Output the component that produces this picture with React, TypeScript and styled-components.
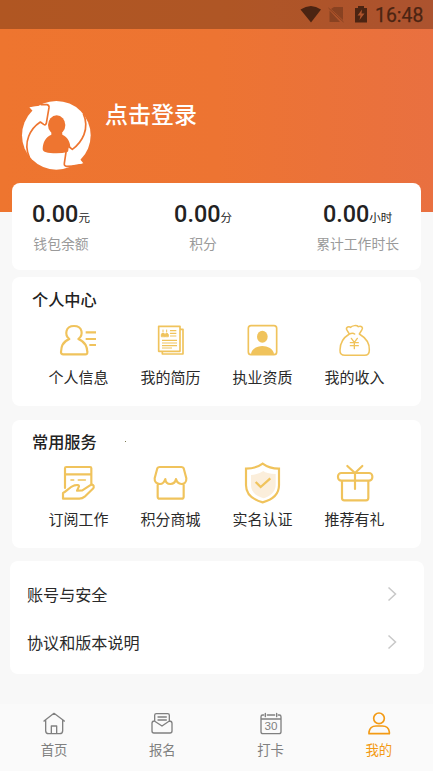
import React from 'react';
import styled, { createGlobalStyle } from 'styled-components';

const GlobalStyle = createGlobalStyle`
  * { box-sizing: border-box; }
  body { margin: 0; background: #f8f8f8; }
`;

const GOLD = '#f0c35c';

const Screen = styled.div`
  width: 433px;
  height: 771px;
  overflow: hidden;
  display: flex;
  flex-direction: column;
  background: linear-gradient(90deg, #ee752f 0%, #ed7432 50%, #e97040 100%) 0 0 / 100% 212px no-repeat #f8f8f8;
  font-family: Roboto, 'Noto Sans CJK SC', sans-serif;
  color: #2a2a2a;
`;

const StatusBar = styled.div`
  height: 29px;
  flex: none;
  display: flex;
  align-items: center;
  justify-content: flex-end;
  padding-right: 9px;
  background: rgba(0, 0, 0, 0.26);
  color: #4b2412;
`;

const StatusIcons = styled.svg`
  width: 72px;
  height: 29px;
  display: block;
  margin-right: 3px;
`;

const Clock = styled.span`
  width: 49px;
  font-size: 19.4px;
  font-weight: 400;
  -webkit-text-stroke: 0.25px currentColor;
  line-height: 29px;
  padding-top: 1px;
  white-space: nowrap;
`;

const Profile = styled.header`
  height: 154px;
  flex: none;
  display: flex;
  align-items: flex-start;
  padding: 71px 0 0 21px;
`;

const Avatar = styled.svg`
  width: 71px;
  height: 71px;
  margin-right: 13px;
`;

const Login = styled.h1`
  margin: -1px 0 0;
  font-size: 23px;
  line-height: 34px;
  font-weight: 500;
  color: #fff;
`;

const Card = styled.section<{ $h: number; $gap: number; $wide?: boolean }>`
  flex: none;
  height: ${p => p.$h}px;
  margin: 0 ${p => (p.$wide ? '9px' : '12px')} ${p => p.$gap}px ${p => (p.$wide ? '10px' : '12px')};
  border-radius: 8px;
  background: #fff;
`;

const Stats = styled(Card)`
  display: flex;
  justify-content: space-between;
  padding: 17px 22px 0 20px;
`;

const Stat = styled.div`
  display: flex;
  flex-direction: column;
  align-items: center;
`;

const Amount = styled.div`
  font-size: 23.4px;
  line-height: 29px;
  font-weight: 500;
  color: #222;
  white-space: nowrap;
`;

const Unit = styled.span`
  font-size: 11.5px;
  font-weight: 400;
`;

const StatLabel = styled.div`
  margin-top: 1px;
  font-size: 13.8px;
  line-height: 20px;
  color: #9a9a9a;
`;

const Title = styled.h2<{ $top: number }>`
  margin: 0;
  padding: ${p => p.$top}px 0 0 20px;
  font-size: 16.2px;
  line-height: 24px;
  font-weight: 500;
  color: #222;
`;

const Dot = styled.i`
  display: inline-block;
  width: 1px;
  height: 1px;
  margin-left: 28px;
  vertical-align: 6px;
  background: #7c7a50;
`;

const Grid = styled.div<{ $top: number }>`
  display: grid;
  grid-template-columns: repeat(4, 92px);
  padding: ${p => p.$top}px 0 0 20px;
`;

const Cell = styled.div`
  display: flex;
  flex-direction: column;
  align-items: center;
`;

const Glyph = styled.svg`
  width: 42px;
  height: 42px;
  fill: none;
  stroke: ${GOLD};
  stroke-width: 6.5;
  stroke-linecap: round;
  stroke-linejoin: round;
`;

const CellLabel = styled.div<{ $top: number }>`
  margin-top: ${p => p.$top}px;
  padding-left: 1px;
  font-size: 15px;
  line-height: 22px;
`;

const Links = styled(Card)`
  padding: 9px 26px 0 17px;
`;

const LinkRow = styled.div`
  height: 48px;
  display: flex;
  align-items: center;
  justify-content: space-between;
  font-size: 16.1px;
`;

const Chevron = styled.svg`
  width: 11px;
  height: 16px;
  fill: none;
  stroke: #c8c8c8;
  stroke-width: 1.5;
`;

const TabBar = styled.nav`
  flex: 1;
  display: grid;
  grid-template-columns: repeat(4, 1fr);
  background: #fafafa;
`;

const Tab = styled.div<{ $active?: boolean }>`
  display: flex;
  flex-direction: column;
  align-items: center;
  padding-top: 7px;
  color: ${p => (p.$active ? '#f39a14' : '#808080')};
  font-size: 13.4px;
  line-height: 20px;
`;

const TabIcon = styled.svg`
  width: 26px;
  height: 26px;
  margin-bottom: 4px;
  fill: none;
  stroke: currentColor;
  stroke-width: 4;
  stroke-linecap: round;
  stroke-linejoin: round;
`;

const DayText = styled.text`
  font: 35px 'Liberation Sans', sans-serif;
  fill: currentColor;
  stroke: none;
`;

const stats = [
  { unit: '元', label: '钱包余额' },
  { unit: '分', label: '积分' },
  { unit: '小时', label: '累计工作时长' },
];

const personal = [
  {
    label: '个人信息',
    box: '171 120 126 126',
    art: (
      <>
        <path d="M208 177C184 188 184 202 183 217Q183 223 190 223H256Q263 223 262 216C261 201 258 187 235 177C251 165 248 138 222 138S193 165 208 177Z" />
        <path d="M257 157H288M257 177H288M268 195H288" strokeLinecap="butt" />
      </>
    ),
  },
  {
    label: '我的简历',
    box: '447 120 126 126',
    art: (
      <>
        <path d="M476 139H540V214H476ZM543 148H549V222H487V216" strokeWidth="5" />
        <path d="M484 169V164Q484 160 489 160T495 164V169ZM496 169V164Q496 160 500 160T505 164V169ZM489 150V156M500 150V156" strokeWidth="3" fill={GOLD} />
        <path d="M510 152H529M510 160H529M510 168H529M486 181H531M486 189H531M486 197H531M486 204H516" strokeWidth="3.5" strokeLinecap="butt" />
      </>
    ),
  },
  {
    label: '执业资质',
    box: '75 120 126 126',
    art: (
      <>
        <rect x="97" y="137" width="85" height="87" rx="8" strokeWidth="5" />
        <ellipse cx="139" cy="170" rx="16" ry="18" fill={GOLD} stroke="none" />
        <path d="M105 223C105 206 124 198 139 198S173 206 174 223Z" fill={GOLD} stroke="none" />
      </>
    ),
  },
  {
    label: '我的收入',
    box: '351 120 126 126',
    art: (
      <>
        <path d="M400 162L392 149C389 141 399 138 404 142C408 136 423 135 427 140C436 136 442 143 438 149L430 162C450 174 461 192 460 210Q460 226 446 226H387Q371 226 372 210C372 190 382 173 400 162ZM400 162Q410 157 416 162" strokeWidth="4.5" />
        <path d="M406 175L415 187L424 175M415 187V206M403 188H427M403 197H427" strokeWidth="4" />
      </>
    ),
  },
];

const services = [
  {
    label: '订阅工作',
    box: '171 141 126 126',
    art: (
      <>
        <path d="M195 219V160Q195 156 199 156H270Q274 156 274 160V206M195 178H274" />
        <path d="M213 195H221M235 195H256" strokeWidth="5" />
        <path d="M189 251V234C199 229 209 216 224 211Q237 208 237 214L231 227L247 226L270 211Q278 206 281 213Q283 218 277 223L254 245Q247 251 238 251Z" />
      </>
    ),
  },
  {
    label: '积分商城',
    box: '447 141 126 126',
    art: (
      <path d="M472 160Q474 156 479 156H544Q549 156 551 160L559 190C560 202 552 207 544 207Q532 206 528 192Q525 207 511 207T496 192Q491 207 480 207C470 207 463 201 464 190ZM473 209V245Q473 251 479 251H545Q551 251 551 245V209" />
    ),
  },
  {
    label: '实名认证',
    box: '75 141 126 126',
    art: (
      <>
        <path d="M142 168Q151 176 179 177V213C178 230 161 245 143 250C118 244 105 229 105 211V180Q128 179 142 168Z" fill="#fbeedb" stroke="none" />
        <path d="M140 146Q120 161 90 161V211C90 238 110 254 140 262C170 254 189 238 189 211V161Q160 161 140 146Z" strokeLinejoin="miter" />
        <path d="M119 201L134 216L163 190" strokeWidth="7" strokeLinecap="butt" strokeLinejoin="miter" />
      </>
    ),
  },
  {
    label: '推荐有礼',
    box: '351 141 126 126',
    art: (
      <>
        <rect x="366" y="174" width="103" height="23" rx="10" />
        <path d="M378 199V249Q378 256 385 256H450Q457 256 457 249V199M417 174V222M394 153L417 174L439 153" />
      </>
    ),
  },
];

const tabs = [
  {
    label: '首页',
    box: '123 47 78 78',
    art: <path d="M132 77L162 54L193 77M137 75V106Q137 115 146 115H179Q188 115 188 106V75M154 114V92H170V114" />,
  },
  {
    label: '报名',
    box: '448 47 78 78',
    art: <path d="M465 77V60Q465 55 470 55H504Q509 55 509 60V77M464 77Q457 77 457 84V107Q457 113 463 113H511Q517 113 517 107V84Q517 77 509 77L487 92L464 77M475 65H500M475 74H500" />,
  },
  {
    label: '打卡',
    box: '125 47 78 78',
    art: (
      <>
        <path d="M142 59H139Q134 59 134 64V109Q134 115 140 115H188Q194 115 194 109V64Q194 59 189 59H186M153 59H175M147 54V64M181 54V64M134 71H194" />
        <DayText x="164" y="105" textAnchor="middle">30</DayText>
      </>
    ),
  },
  {
    label: '我的',
    box: '450 47 78 78',
    active: true,
    art: (
      <>
        <circle cx="489" cy="69" r="16" strokeWidth="5" />
        <path d="M459 115V110Q462 92 480 92H499Q518 92 520 110V115Z" strokeWidth="5" />
      </>
    ),
  },
];

function Features({ items, top, labelTop }: { items: typeof personal; top: number; labelTop: number }) {
  return (
    <Grid $top={top}>
      {items.map(item => (
        <Cell key={item.label}>
          <Glyph viewBox={item.box}>{item.art}</Glyph>
          <CellLabel $top={labelTop}>{item.label}</CellLabel>
        </Cell>
      ))}
    </Grid>
  );
}

export default function App() {
  return (
    <>
      <GlobalStyle />
      <Screen>
        <StatusBar>
          <StatusIcons viewBox="0 0 72 29" fill="currentColor">
            <path d="M.5 9.5Q11 2.500 21 9.500L11 22.500Z" />
            <path d="M34 7H43V20L31 9ZM29.500 10.500L40 22H29.500Z" opacity=".38" />
            <path d="M28.500 8L43.500 22" stroke="currentColor" opacity=".38" />
            <path fillRule="evenodd" d="M58 6H64V8H67V22.500H55V8H58ZM62 9.500L57.500 15.500H60.500L59.500 20L64.500 13.500H61.500Z" />
          </StatusIcons>
          <Clock>16:48</Clock>
        </StatusBar>
        <Profile>
          <Avatar viewBox="63 60 213 213">
            <circle cx="169" cy="166" r="103" fill="#fff" />
            <path d="M88 82L140 74L134 135L116 121L106 101Z" fill="#fff" />
            <path d="M250 250L198 258L202 200L222 210L234 230Z" fill="#fff" />
            <g fill="#ee7530">
              <ellipse cx="170" cy="135" rx="26" ry="29" />
              <path d="M154 150H186L187 164C203 171 212 187 211 207Q209 220 169 220Q128 220 128 207C129 186 137 171 154 164Z" />
            </g>
            <path d="M94 81L140 77L132 131L119 121L106 101Z" fill="#fff" />
            <path d="M246 251L199 256L206 202L219 211L232 231Z" fill="#fff" />
            <g fill="none" stroke="#ee7530" strokeWidth="5" strokeLinejoin="round">
              <path d="M122 74L141 74Q148 75 147 83L139 130Q137 137 131 133L121 126C92 145 68 186 88 232" />
              <path d="M222 258L200 259Q192 259 193 250L200 203Q202 197 208 201L217 208C246 187 270 147 250 101" />
            </g>
          </Avatar>
          <Login>点击登录</Login>
        </Profile>
        <Stats $h={87} $gap={7}>
          {stats.map(s => (
            <Stat key={s.label}>
              <Amount>0.00<Unit>{s.unit}</Unit></Amount>
              <StatLabel>{s.label}</StatLabel>
            </Stat>
          ))}
        </Stats>
        <Card $h={129} $gap={14}>
          <Title $top={12}>个人中心</Title>
          <Features items={personal} top={7} labelTop={5} />
        </Card>
        <Card $h={128} $gap={13}>
          <Title $top={11}>常用服务<Dot /></Title>
          <Features items={services} top={7} labelTop={5} />
        </Card>
        <Links $h={113} $gap={30} $wide>
          {['账号与安全', '协议和版本说明'].map(name => (
            <LinkRow key={name}>
              <span>{name}</span>
              <Chevron viewBox="0 0 11 16"><path d="M1.500 1.500L8.500 8L1.500 14.500" /></Chevron>
            </LinkRow>
          ))}
        </Links>
        <TabBar>
          {tabs.map(t => (
            <Tab key={t.label} $active={t.active}>
              <TabIcon viewBox={t.box}>{t.art}</TabIcon>
              {t.label}
            </Tab>
          ))}
        </TabBar>
      </Screen>
    </>
  );
}
